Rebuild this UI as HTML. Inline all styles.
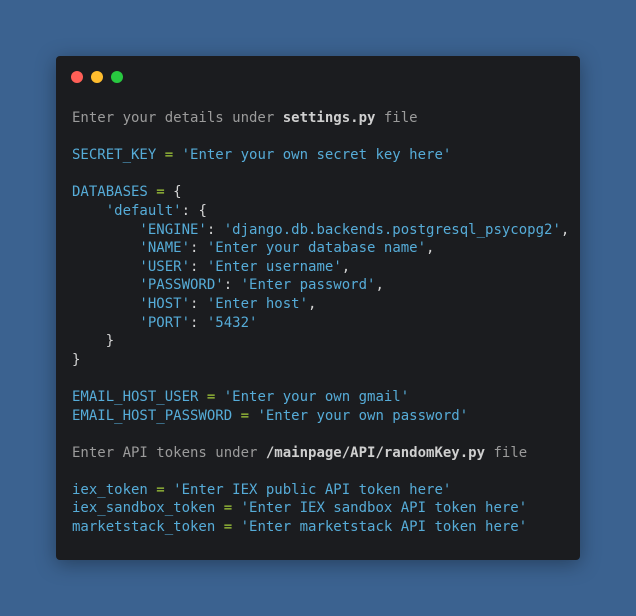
<!DOCTYPE html>
<html><head><meta charset="utf-8"><style>
html,body{margin:0;padding:0;width:636px;height:616px;background:#3b6290;overflow:hidden}
.card{position:absolute;left:56px;top:56px;width:524px;height:504px;background:#1b1c1f;border-radius:4px;box-shadow:0 4px 20px rgba(0,0,0,.35)}
.dot{position:absolute;top:15px;width:12px;height:12px;border-radius:50%}
pre{position:absolute;left:16px;top:53px;margin:0;font-family:"DejaVu Sans Mono","Liberation Mono",monospace;font-size:14px;line-height:18.6px;color:#56acd8;white-space:pre}
.g{color:#9b9b9b}.b{color:#cfcfcf;font-weight:bold}.o{color:#a3cc3a}.w{color:#d4d4d4}
</style></head><body>
<div class="card">
<div class="dot" style="left:15px;background:#fe5f57"></div>
<div class="dot" style="left:35px;background:#febc2e"></div>
<div class="dot" style="left:55px;background:#28c840"></div>
<pre><span class="g">Enter your details under <span class="b">settings.py</span> file</span>

SECRET_KEY <span class="o">=</span> 'Enter your own secret key here'

DATABASES <span class="o">=</span> <span class="w">{</span>
    'default'<span class="w">:</span> <span class="w">{</span>
        'ENGINE'<span class="w">:</span> 'django.db.backends.postgresql_psycopg2'<span class="w">,</span>
        'NAME'<span class="w">:</span> 'Enter your database name'<span class="w">,</span>
        'USER'<span class="w">:</span> 'Enter username'<span class="w">,</span>
        'PASSWORD'<span class="w">:</span> 'Enter password'<span class="w">,</span>
        'HOST'<span class="w">:</span> 'Enter host'<span class="w">,</span>
        'PORT'<span class="w">:</span> '5432'
    <span class="w">}</span>
<span class="w">}</span>

EMAIL_HOST_USER <span class="o">=</span> 'Enter your own gmail'
EMAIL_HOST_PASSWORD <span class="o">=</span> 'Enter your own password'

<span class="g">Enter API tokens under <span class="b">/mainpage/API/randomKey.py</span> file</span>

iex_token <span class="o">=</span> 'Enter IEX public API token here'
iex_sandbox_token <span class="o">=</span> 'Enter IEX sandbox API token here'
marketstack_token <span class="o">=</span> 'Enter marketstack API token here'</pre>
</div>
</body></html>
